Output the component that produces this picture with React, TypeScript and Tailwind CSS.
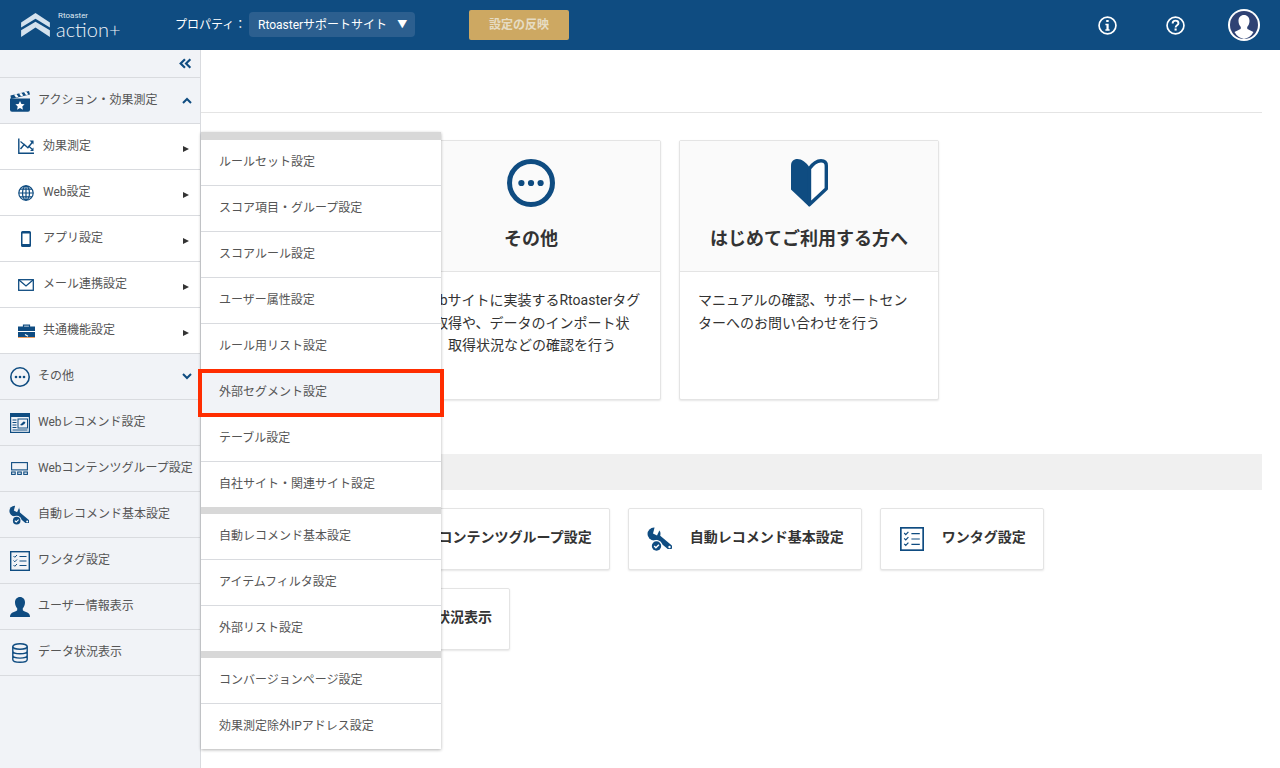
import React from "react";

const C = "#0f4c81";
const font = { fontFamily: '"Roboto","Noto Sans CJK JP","Noto Sans",sans-serif' };

type IP = { className?: string };
const Clapper = ({ className }: IP) => (
  <svg viewBox="0 0 22 22" className={className}>
    <path fill={C} d="M1.500 5.500 20 1l1 3.500L2 9Z" />
    <path fill="#fff" d="m5 4.700 2.400-.6 2 2.700-2.400.6Zm5-1.200 2.400-.6 2 2.700-2.400.6Zm5-1.200 2.400-.6 2 2.700-2.400.6Z" />
    <path fill={C} d="M1 8.500h20v11.300a2 2 0 0 1-2 2H3a2 2 0 0 1-2-2Z" />
    <path fill="#fff" d="m11 11 1.400 2.900 3.200.4-2.300 2.200.6 3.200-2.900-1.600-2.900 1.600.6-3.200-2.300-2.200 3.200-.4Z" />
  </svg>
);
const ChartIcon = ({ className }: IP) => (
  <svg viewBox="0 0 16 16" className={className} fill="none" stroke={C} strokeWidth="1.400">
    <path d="M.8.500v14.700H16" />
    <path d="m2.500 11 3.700-4.500 3.700 3.300L15 3.500" />
    <path d="M2.500 3.500 6 6.500M10.500 8l4 3.500" strokeWidth="1.100" />
    <path fill={C} stroke="none" d="M15.500 2.500v4l-4-4ZM15.500 13v-3.500l-3.500 3.500Z" />
  </svg>
);
const Globe = ({ className }: IP) => (
  <svg viewBox="0 0 16 16" className={className} fill="none" stroke={C} strokeWidth="1.200">
    <circle cx="8" cy="8" r="7.200" />
    <ellipse cx="8" cy="8" rx="3.500" ry="7.200" />
    <path d="M8 .8v14.400M.8 8h14.400M2 4.200h12M2 11.800h12" />
  </svg>
);
const Phone = ({ className }: IP) => (
  <svg viewBox="0 0 10 16" className={className}>
    <path fill={C} fillRule="evenodd" d="M1.500 0h7A1.500 1.500 0 0 1 10 1.500v13A1.500 1.500 0 0 1 8.500 16h-7A1.500 1.500 0 0 1 0 14.500v-13A1.500 1.500 0 0 1 1.500 0Zm0 2.500v10.500h7V2.500Z" />
  </svg>
);
const Mail = ({ className }: IP) => (
  <svg viewBox="0 0 16 12" className={className} fill="none" stroke={C} strokeWidth="1.300">
    <rect x=".7" y=".7" width="14.600" height="10.600" />
    <path d="m1 1 7 6 7-6" />
  </svg>
);
const Case = ({ className }: IP) => (
  <svg viewBox="0 0 17 14" className={className}>
    <path fill="none" stroke={C} strokeWidth="1.200" d="M5.500 3V1.200h6V3" />
    <rect x="0" y="2.500" width="17" height="4.500" fill={C} />
    <rect x="0" y="8" width="17" height="6" fill={C} />
    <rect x="0" y="13" width="17" height="1" fill="#f0a060" />
    <path stroke="#fff" strokeWidth="1.200" d="m7 10.500 3 1.700" />
  </svg>
);
const Dots = ({ className, w = 1.600 }: IP & { w?: number }) => (
  <svg viewBox="0 0 20 20" className={className}>
    <circle cx="10" cy="10" r={10 - w / 2} fill="none" stroke={C} strokeWidth={w} />
    <circle cx="6" cy="10" r="1.300" fill={C} />
    <circle cx="10" cy="10" r="1.300" fill={C} />
    <circle cx="14" cy="10" r="1.300" fill={C} />
  </svg>
);
const WebRec = ({ className }: IP) => (
  <svg viewBox="0 0 20 20" className={className}>
    <rect x=".6" y=".6" width="18.800" height="18.800" fill="#f1f3f7" stroke={C} strokeWidth="1.200" />
    <rect x="0" y="0" width="20" height="4" fill={C} />
    <path stroke={C} strokeWidth="1" d="M2.500 7h4M2.500 9.500h4M2.500 12h4M2.500 14.500h4M2.500 17h15" />
    <rect x="8" y="6" width="9.500" height="9" fill="none" stroke={C} strokeWidth="1" />
    <path fill={C} d="m10 12 3.500-3.500 2 .5-1 2-2.500 1.500Z" />
  </svg>
);
const Content = ({ className }: IP) => (
  <svg viewBox="0 0 17 13" className={className} fill="none" stroke={C} strokeWidth="1.100">
    <rect x=".6" y=".6" width="15.800" height="7.300" />
    <rect x=".6" y="10" width="3.600" height="2.400" />
    <rect x="6.700" y="10" width="3.600" height="2.400" />
    <rect x="12.800" y="10" width="3.600" height="2.400" />
  </svg>
);
const Wrench = ({ className }: IP) => (
  <svg viewBox="0 0 26 24" className={className}>
    <mask id="wrench-cut">
      <rect x="-2" y="-2" width="30" height="30" fill="#fff" />
      <path fill="#000" d="M6 6.500 10 8.500 13.500 1 8 -1Z" />
      <circle cx="9.500" cy="19" r="6" fill="#000" />
    </mask>
    <g mask="url(#wrench-cut)" fill={C}>
      <circle cx="7" cy="7" r="6.500" />
      <path d="M7 7 22.500 20" stroke={C} strokeWidth="5.500" strokeLinecap="round" />
    </g>
    <circle cx="22.500" cy="20" r="1.200" fill="#fff" />
    <circle cx="9.500" cy="19" r="4.700" fill={C} />
    <path fill="none" stroke="#fff" strokeWidth="1.400" d="m7.200 19 1.700 1.700 3-3" />
  </svg>
);
const Checklist = ({ className, bg = "none" }: IP & { bg?: string }) => (
  <svg viewBox="0 0 20 20" className={className}>
    <rect x=".7" y=".7" width="18.600" height="18.600" fill={bg} stroke={C} strokeWidth="1.400" />
    <path fill="none" stroke={C} strokeWidth="1" d="m3.500 5 1.300 1.300L7 4M3.500 9.500l1.300 1.300 2.200-2.300M3.500 14l1.300 1.300 2.200-2.300M9.500 5.500h7M9.500 10h7M9.500 14.500h7" />
  </svg>
);
const User = ({ className }: IP) => (
  <svg viewBox="0 0 20 20" className={className}>
    <path fill={C} d="M10 0c3 0 5 2.300 5 5.500 0 2.300-1 4.500-2.200 5.800v1.800c0 1 4 2 5.700 3.200.9.700 1.500 2 1.500 3.700H0c0-1.700.6-3 1.500-3.700 1.700-1.200 5.700-2.200 5.700-3.200v-1.800C6 10 5 7.800 5 5.500 5 2.300 7 0 10 0Z" />
  </svg>
);
const Db = ({ className }: IP) => (
  <svg viewBox="0 0 16 20" className={className} fill="none" stroke={C} strokeWidth="1.400">
    <ellipse cx="8" cy="3.500" rx="7.200" ry="2.800" />
    <path d="M.8 3.500v13c0 1.600 3.200 2.800 7.200 2.800s7.200-1.200 7.200-2.800v-13M.8 8c0 1.600 3.200 2.800 7.200 2.800s7.200-1.200 7.200-2.800M.8 12.300c0 1.600 3.200 2.800 7.200 2.800s7.200-1.200 7.200-2.800" />
  </svg>
);
const Leaf = ({ className }: IP) => (
  <svg viewBox="0 0 37 48" className={className}>
    <path fill={C} d="M18.500 8.500C15 3 10.500 0 6.500 0 2.500 0 0 2.500 0 6.500V30.500L18.500 48Z" />
    <path fill="#fff" stroke={C} strokeWidth="3.400" strokeLinejoin="round" d="M18.500 9.500C22 4.500 26.500 1.700 30 1.700c3.500 0 5.300 2 5.300 5V29.800L18.500 45.500Z" />
  </svg>
);
const Chev = ({ up }: { up?: boolean }) => (
  <svg viewBox="0 0 10 7" className="w-[10px] h-[7px]" fill="none" stroke={C} strokeWidth="2">
    <path d={up ? "M1 6l4-4 4 4" : "M1 1l4 4 4-4"} />
  </svg>
);

const Row = ({ icon, label, white, right }: { icon: React.ReactNode; label: string; white?: boolean; right: React.ReactNode }) => (
  <div className={`h-[46px] flex items-center border-b border-[#d9dbdf] text-[12px] text-[#555] ${white ? "bg-white" : ""}`}>
    <div className={white ? "w-[43px] flex justify-center pl-[9px] shrink-0" : "w-[38px] flex justify-center pl-[1px] shrink-0"}>{icon}</div>
    <span className="whitespace-nowrap flex-1 -mt-[1px]">{label}</span>
    {right}
  </div>
);
const Tri = () => (
  <span className="mr-[11px] w-0 h-0 border-y-[3px] border-y-transparent border-l-[6px] border-l-[#333] mt-[5px]" />
);
const Arrow = ({ up }: { up?: boolean }) => <span className="mr-[8px] flex"><Chev up={up} /></span>;

const groups: string[][] = [
  ["ルールセット設定", "スコア項目・グループ設定", "スコアルール設定", "ユーザー属性設定", "ルール用リスト設定", "外部セグメント設定", "テーブル設定", "自社サイト・関連サイト設定"],
  ["自動レコメンド基本設定", "アイテムフィルタ設定", "外部リスト設定"],
  ["コンバージョンページ設定", "効果測定除外IPアドレス設定"],
];

const Btn = ({ icon, label }: { icon?: React.ReactNode; label: string }) => (
  <div className="h-[62px] flex items-center pl-[18px] pr-[17px] gap-[17px] bg-white border border-[#e4e4e4] rounded-[2px] shadow-[0_1px_2px_rgba(0,0,0,0.1)] text-[14px] font-bold text-[#333] whitespace-nowrap">
    {icon}
    <span className="-mt-[3px]">{label}</span>
  </div>
);

const Card = ({ icon, title, text }: { icon: React.ReactNode; title: string; text: string }) => (
  <div className="w-[260px] h-[260px] border border-[#e4e4e4] rounded-[2px] shadow-[0_1px_2px_rgba(0,0,0,0.1)] bg-white">
    <div className="h-[131px] bg-[#fafafa] border-b border-[#e4e4e4] flex flex-col items-center">
      <div className="h-[48px] mt-[18px] flex items-center">{icon}</div>
      <div className="mt-[20px] text-[18px] leading-[24px] font-bold text-[#333] whitespace-nowrap">{title}</div>
    </div>
    <p className="px-[18px] pt-[17px] text-[14px] leading-[22.500px] text-[#333]">{text}</p>
  </div>
);

export default function App() {
  return (
    <div className="relative w-[1280px] h-[768px] overflow-hidden bg-white" style={font}>
      <header className="h-[50px] bg-[#0f4c81] flex items-center text-white">
        <div className="w-[175px] pl-[20px] flex items-center shrink-0">
          <svg viewBox="0 0 28 26" preserveAspectRatio="none" className="w-[31px] h-[25px]">
            <path fill="#d5e2ee" d="M14 0 27 10v5L14 6 1 15v-5Z" />
            <path fill="#d5e2ee" d="M14 9l13 9v7L14 15 1 25v-7Z" />
          </svg>
          <div className="ml-[5px] flex flex-col items-start -mt-[1px]">
            <span className="text-[8px] leading-[8px] text-[#dfe8f1] ml-[2px]">Rtoaster</span>
            <span className="text-[20px] leading-[18px] font-light text-[#eef3f8]" style={{ fontFamily: '"Lato",sans-serif' }}>action+</span>
          </div>
        </div>
        <span className="text-[12px] w-[74px] whitespace-nowrap -mt-[1px]">プロパティ：</span>
        <div className="w-[166px] h-[25px] bg-[#2c5f8f] rounded-[4px] flex items-center pl-[9px] text-[12px] whitespace-nowrap -mt-[1px]">
          <span>Rtoasterサポートサイト</span>
          <span className="ml-[10px] text-[10px]">▼</span>
        </div>
        <div className="ml-[54px] w-[100px] h-[30px] bg-[#cda862] rounded-[2px] flex items-center justify-center text-[12px] font-bold text-[#e6dcc3]">設定の反映</div>
        <div className="ml-auto flex items-center">
          <svg viewBox="0 0 18 18" className="w-[19px] h-[19px]">
            <circle cx="9" cy="9" r="8" fill="none" stroke="#fff" strokeWidth="1.600" />
            <path fill="#fff" d="M7.800 3.700h2.300v2.100H7.800ZM7 7.300h3.100v5.300H11V14H7v-1.400h1V8.700H7Z" />
          </svg>
          <svg viewBox="0 0 18 18" className="w-[19px] h-[19px] ml-[49px]">
            <circle cx="9" cy="9" r="8" fill="none" stroke="#fff" strokeWidth="1.600" />
            <path fill="none" stroke="#fff" strokeWidth="1.800" d="M6.300 7c0-1.700 1.200-2.600 2.700-2.600S11.800 5.300 11.800 6.800c0 1.800-2.700 2-2.700 4" />
            <rect x="8.100" y="11.800" width="2" height="2" fill="#fff" />
          </svg>
          <svg viewBox="0 0 32 32" className="w-[32px] h-[32px] ml-[43px] mr-[20px]">
            <circle cx="16" cy="16" r="16" fill="#fff" />
            <circle cx="16" cy="16" r="14" fill="#2f4274" />
            <path fill="#fff" d="M16 6c3.300 0 5.500 2.500 5.500 6 0 2.500-1 4.700-2.300 6v1.500c0 1 3.800 1.800 6.300 3.500A14 14 0 0 1 16 30a14 14 0 0 1-9.500-7c2.500-1.700 6.300-2.500 6.300-3.500V18c-1.300-1.300-2.300-3.500-2.300-6 0-3.500 2.200-6 5.500-6Z" />
          </svg>
        </div>
      </header>

      <div className="flex h-[718px]">
        <aside className="w-[201px] shrink-0 bg-[#f1f3f7] border-r border-[#d9dbdf]">
          <div className="h-[28px] border-b border-[#d9dbdf] flex items-center justify-end pr-[8px]">
            <svg viewBox="0 0 12 10" className="w-[13px] h-[11px]" fill="none" stroke={C} strokeWidth="2">
              <path d="M5.500 1 1.500 5l4 4M10.500 1l-4 4 4 4" />
            </svg>
          </div>
          <Row icon={<Clapper className="w-[22px] h-[22px]" />} label="アクション・効果測定" right={<Arrow up />} />
          <Row white icon={<ChartIcon className="w-[16px] h-[16px] -mt-[1px]" />} label="効果測定" right={<Tri />} />
          <Row white icon={<Globe className="w-[16px] h-[16px]" />} label="Web設定" right={<Tri />} />
          <Row white icon={<Phone className="w-[10px] h-[16px]" />} label="アプリ設定" right={<Tri />} />
          <Row white icon={<Mail className="w-[16px] h-[12px]" />} label="メール連携設定" right={<Tri />} />
          <Row white icon={<Case className="w-[17px] h-[14px]" />} label="共通機能設定" right={<Tri />} />
          <Row icon={<Dots className="w-[20px] h-[20px]" />} label="その他" right={<Arrow />} />
          <Row icon={<WebRec className="w-[20px] h-[20px]" />} label="Webレコメンド設定" right={null} />
          <Row icon={<Content className="w-[17px] h-[13px]" />} label="Webコンテンツグループ設定" right={null} />
          <Row icon={<Wrench className="w-[21px] h-[20px]" />} label="自動レコメンド基本設定" right={null} />
          <Row icon={<Checklist className="w-[20px] h-[20px]" />} label="ワンタグ設定" right={null} />
          <Row icon={<User className="w-[20px] h-[20px]" />} label="ユーザー情報表示" right={null} />
          <Row icon={<Db className="w-[16px] h-[20px]" />} label="データ状況表示" right={null} />
        </aside>

        <main className="flex-1 pr-[18px]">
          <div className="h-[63px] border-b border-[#e4e4e4]" />
          <div className="mt-[27px] pl-[200px] flex gap-[18px]">
            <Card icon={<Dots className="w-[48px] h-[48px]" w={2.100} />} title="その他" text="Webサイトに実装するRtoasterタグの取得や、データのインポート状況、取得状況などの確認を行う" />
            <Card icon={<Leaf className="w-[37px] h-[48px]" />} title="はじめてご利用する方へ" text="マニュアルの確認、サポートセンターへのお問い合わせを行う" />
          </div>
          <div className="mt-[54px] ml-[18px] h-[36px] bg-[#f0f0f0]" />
          <div className="mt-[18px] pl-[148px] flex gap-[18px]">
            <Btn icon={<Content className="w-[26px] h-[20px]" />} label="Webコンテンツグループ設定" />
            <Btn icon={<Wrench className="w-[26px] h-[24px]" />} label="自動レコメンド基本設定" />
            <Btn icon={<Checklist className="w-[24px] h-[24px] mx-[1px]" />} label="ワンタグ設定" />
          </div>
          <div className="mt-[18px] pl-[131px] flex">
            <Btn icon={<Db className="w-[20px] h-[26px] mx-[3px]" />} label="データ状況表示" />
          </div>
        </main>
      </div>

      {/* flyout menu */}
      <div className="absolute left-[201px] top-[132px] w-[240px] bg-white shadow-[0_1px_3px_rgba(0,0,0,0.3)] text-[12px] text-[#555]">
        {groups.map((g, gi) => (
          <div key={gi} className={gi === 0 ? "border-t-[8px] border-[#d8d8d8]" : "border-t-[7px] border-[#d8d8d8]"}>
            {g.map((t, i) => (
              <div
                key={t}
                className={`flex items-center pl-[18px] whitespace-nowrap ${i === g.length - 1 ? "h-[45px]" : "h-[46px] border-b border-[#d9dbdf]"} ${t === "外部セグメント設定" ? "bg-[#f1f3f7]" : ""}`}
              >
                <span className="-mt-[1px]">{t}</span>
              </div>
            ))}
          </div>
        ))}
      </div>

      {/* annotation */}
      <div className="absolute left-[198px] top-[369px] w-[246px] h-[48px] border-[4px] border-[#ff2d00]" />
    </div>
  );
}
